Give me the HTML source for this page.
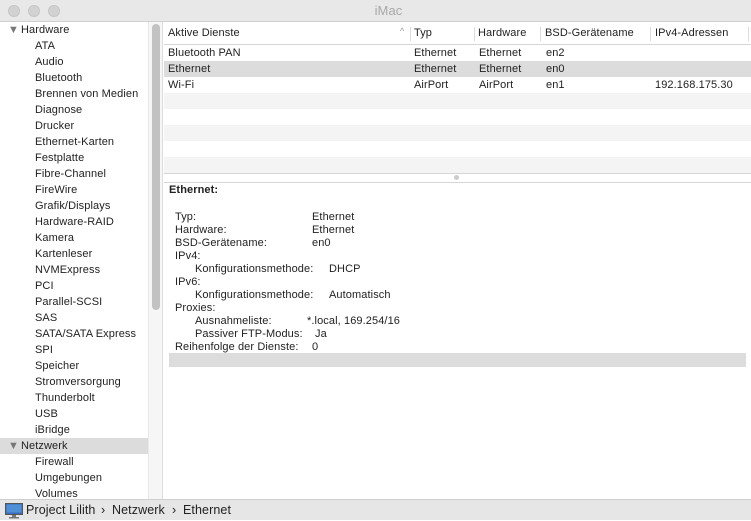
<!DOCTYPE html>
<html><head><meta charset="utf-8"><style>
*{margin:0;padding:0;box-sizing:border-box}
body{width:751px;height:520px;overflow:hidden;background:#fff;font-family:"Liberation Sans",sans-serif;font-size:11px;color:#222;position:relative;letter-spacing:0.1px}
.abs{position:absolute}
.title{left:0;top:0;width:751px;height:22px;background:#e8e8e8;border-bottom:1px solid #d0d0d0}
.dot{top:5px;width:12px;height:12px;border-radius:50%;background:#d2d2d2;border:1px solid #c6c6c6}
.side{left:0;top:22px;width:148px;height:477px;background:#fff}
.si{position:absolute;left:0;width:148px;height:16px;line-height:17px;white-space:nowrap}
.track{left:148px;top:22px;width:15px;height:477px;background:#f6f6f6;border-left:1px solid #e9e9e9;border-right:1px solid #dcdcdc}
.thumb{left:152px;top:24px;width:8px;height:286px;background:#c2c2c2;border-radius:4px}
.hdr{left:164px;top:23px;width:587px;height:22px;background:#fff;border-bottom:1px solid #d6d6d6}
.row{position:absolute;left:164px;width:587px;height:16px;line-height:17px}
.row span,.hdr span{position:absolute;white-space:nowrap}
.sep{position:absolute;top:4px;width:1px;height:14px;background:#dcdcdc}
.det{position:absolute;white-space:nowrap;line-height:14px}
.status{left:0;top:499px;width:751px;height:21px;background:#e6e6e6;border-top:1px solid #cfcfcf;font-size:12.5px;line-height:21px}
.status span{position:absolute;top:0}
</style></head><body>
<div class="abs title"></div>
<div class="abs dot" style="left:8px"></div>
<div class="abs dot" style="left:28px"></div>
<div class="abs dot" style="left:48px"></div>
<div class="abs" style="left:0;width:751px;top:3px;text-align:center;color:#a8a8a8;font-size:13px;padding-left:26px">iMac</div>

<div class="abs side">
<div class="si" style="top:0;left:8px"><span style="color:#777">▼</span><span style="margin-left:2px">Hardware</span></div>
<div class="si" style="top:16px;left:35px">ATA</div>
<div class="si" style="top:32px;left:35px">Audio</div>
<div class="si" style="top:48px;left:35px">Bluetooth</div>
<div class="si" style="top:64px;left:35px">Brennen von Medien</div>
<div class="si" style="top:80px;left:35px">Diagnose</div>
<div class="si" style="top:96px;left:35px">Drucker</div>
<div class="si" style="top:112px;left:35px">Ethernet-Karten</div>
<div class="si" style="top:128px;left:35px">Festplatte</div>
<div class="si" style="top:144px;left:35px">Fibre-Channel</div>
<div class="si" style="top:160px;left:35px">FireWire</div>
<div class="si" style="top:176px;left:35px">Grafik/Displays</div>
<div class="si" style="top:192px;left:35px">Hardware-RAID</div>
<div class="si" style="top:208px;left:35px">Kamera</div>
<div class="si" style="top:224px;left:35px">Kartenleser</div>
<div class="si" style="top:240px;left:35px">NVMExpress</div>
<div class="si" style="top:256px;left:35px">PCI</div>
<div class="si" style="top:272px;left:35px">Parallel-SCSI</div>
<div class="si" style="top:288px;left:35px">SAS</div>
<div class="si" style="top:304px;left:35px">SATA/SATA Express</div>
<div class="si" style="top:320px;left:35px">SPI</div>
<div class="si" style="top:336px;left:35px">Speicher</div>
<div class="si" style="top:352px;left:35px">Stromversorgung</div>
<div class="si" style="top:368px;left:35px">Thunderbolt</div>
<div class="si" style="top:384px;left:35px">USB</div>
<div class="si" style="top:400px;left:35px">iBridge</div>
<div class="si" style="top:416px;background:#dcdcdc;padding-left:8px"><span style="color:#777">▼</span><span style="margin-left:2px">Netzwerk</span></div>
<div class="si" style="top:432px;left:35px">Firewall</div>
<div class="si" style="top:448px;left:35px">Umgebungen</div>
<div class="si" style="top:464px;left:35px">Volumes</div>
</div>
<div class="abs track"></div>
<div class="abs thumb"></div>

<div class="abs hdr">
<span style="left:4px;top:4px">Aktive Dienste</span>
<span style="left:236px;top:3px;color:#999;font-size:9px">^</span>
<div class="sep" style="left:246px"></div><span style="left:250px;top:4px">Typ</span>
<div class="sep" style="left:310px"></div><span style="left:314px;top:4px">Hardware</span>
<div class="sep" style="left:376px"></div><span style="left:381px;top:4px">BSD-Gerätename</span>
<div class="sep" style="left:486px"></div><span style="left:491px;top:4px">IPv4-Adressen</span>
<div class="sep" style="left:584px"></div>
</div>
<div class="row" style="top:45px"><span style="left:4px">Bluetooth PAN</span><span style="left:250px">Ethernet</span><span style="left:315px">Ethernet</span><span style="left:382px">en2</span></div>
<div class="row" style="top:61px;background:#dcdcdc"><span style="left:4px">Ethernet</span><span style="left:250px">Ethernet</span><span style="left:315px">Ethernet</span><span style="left:382px">en0</span></div>
<div class="row" style="top:77px"><span style="left:4px">Wi-Fi</span><span style="left:250px">AirPort</span><span style="left:315px">AirPort</span><span style="left:382px">en1</span><span style="left:491px">192.168.175.30</span></div>
<div class="row" style="top:93px;background:#f4f4f4"></div>
<div class="row" style="top:125px;background:#f4f4f4"></div>
<div class="row" style="top:157px;background:#f4f4f4"></div>
<div class="abs" style="left:164px;top:173px;width:587px;height:10px;background:#fff;border-top:1px solid #d6d6d6;border-bottom:1px solid #d6d6d6"></div>
<div class="abs" style="left:454px;top:175px;width:5px;height:5px;border-radius:50%;background:#ccc"></div>

<div class="det" style="left:169px;top:183px;font-weight:bold">Ethernet:</div>
<div class="det" style="left:175px;top:210px">Typ:</div><div class="det" style="left:312px;top:210px">Ethernet</div>
<div class="det" style="left:175px;top:223px">Hardware:</div><div class="det" style="left:312px;top:223px">Ethernet</div>
<div class="det" style="left:175px;top:236px">BSD-Gerätename:</div><div class="det" style="left:312px;top:236px">en0</div>
<div class="det" style="left:175px;top:249px">IPv4:</div>
<div class="det" style="left:195px;top:262px">Konfigurationsmethode:</div><div class="det" style="left:329px;top:262px">DHCP</div>
<div class="det" style="left:175px;top:275px">IPv6:</div>
<div class="det" style="left:195px;top:288px">Konfigurationsmethode:</div><div class="det" style="left:329px;top:288px">Automatisch</div>
<div class="det" style="left:175px;top:301px">Proxies:</div>
<div class="det" style="left:195px;top:314px">Ausnahmeliste:</div><div class="det" style="left:307px;top:314px">*.local, 169.254/16</div>
<div class="det" style="left:195px;top:327px">Passiver FTP-Modus:</div><div class="det" style="left:315px;top:327px">Ja</div>
<div class="det" style="left:175px;top:340px">Reihenfolge der Dienste:</div><div class="det" style="left:312px;top:340px">0</div>
<div class="abs" style="left:169px;top:353px;width:577px;height:14px;background:#dcdcdc"></div>

<div class="abs status">
<svg class="abs" style="left:5px;top:3px" width="18" height="16" viewBox="0 0 18 16"><rect x="0.5" y="0.5" width="17" height="11" fill="#3a6fb8" stroke="#555"/><rect x="1.5" y="1.5" width="15" height="8" fill="#4e8fd8"/><rect x="7" y="12" width="4" height="2" fill="#777"/><rect x="4" y="14" width="10" height="1.5" fill="#777"/></svg>
<span style="left:26px">Project Lilith</span>
<span style="left:101px">›</span><span style="left:112px">Netzwerk</span>
<span style="left:172px">›</span><span style="left:183px">Ethernet</span>
</div>
</body></html>
